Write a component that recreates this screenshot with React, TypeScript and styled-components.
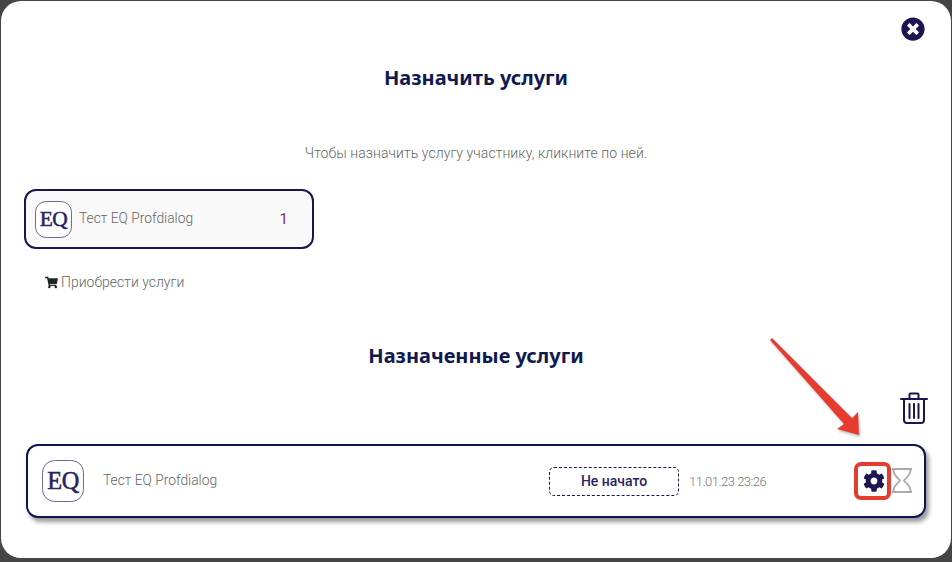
import {createGlobalStyle} from "styled-components"
import styled from "styled-components"
import {FaCog, FaShoppingCart, FaTimesCircle} from "react-icons/fa"

const Global = createGlobalStyle`
html, body {
	margin     : 0;
	height     : 562px;
	overflow   : hidden;
	background : #454545;
	font-family: Roboto, "Noto Sans", sans-serif;
}
`

const Modal = styled.div`
position       : relative;
box-sizing     : border-box;
margin         : 1px 1px 0 1px;
width          : 950px;
height         : 557px;
padding-top    : 16px;
background     : #fff;
border-radius  : 20px;
display        : flex;
flex-direction : column;
`

const CloseRow = styled.div`
display         : flex;
justify-content : flex-end;
height          : 24px;
padding-right   : 26px;
color           : #1c1550;
font-size       : 24px;
`

const Title = styled.h2<{$top: number}>`
margin      : ${p => p.$top}px 0 0;
height      : 30px;
line-height : 30px;
text-align  : center;
font-family : "Noto Sans", sans-serif;
font-size   : 20px;
font-weight : 700;
color       : #0f1a50;
`

const Hint = styled.p`
margin         : 50px 0 0;
height         : 20px;
line-height    : 20px;
text-align     : center;
font-size      : 14px;
font-weight    : 300;
letter-spacing : 0.07px;
color          : #666;
`

const ServiceCard = styled.div`
box-sizing    : border-box;
margin        : 26px 0 0 23px;
width         : 290px;
height        : 60px;
padding       : 0 24px 0 9px;
display       : flex;
align-items   : center;
gap           : 7px;
background    : #f9f9f9;
border        : 2px solid #1c1450;
border-radius : 12px;
`

const LogoBox = styled.div<{$size: number}>`
box-sizing      : border-box;
flex            : none;
width           : ${p => p.$size}px;
height          : ${p => p.$size}px;
display         : flex;
align-items     : center;
justify-content : center;
background      : #fff;
border          : 1px solid #6f6a96;
border-radius   : ${p => p.$size * 0.3}px;
font-family     : "Liberation Serif", serif;
font-weight     : 400;
font-size       : ${p => p.$size * 0.58}px;
letter-spacing  : -0.5px;
-webkit-text-stroke : 0.5px #2a2360;
color           : #2a2360;
`

const ServiceName = styled.span`
flex          : 1;
margin-bottom : 2px;
font-size     : 13.800px;
font-weight   : 300;
color         : #666;
`

const Count = styled.span`
font-size   : 15px;
font-weight : 400;
color       : #8a2a60;
`

const BuyRow = styled.div`
margin      : 23px 0 0 44px;
height      : 20px;
display     : flex;
align-items : center;
gap         : 3px;
font-size   : 14px;
font-weight : 300;
color       : #666;
svg { color: #222; font-size: 13px; }
`

const TrashRow = styled.div`
display         : flex;
justify-content : flex-end;
margin-top      : 21px;
padding-right   : 23px;
height          : 32px;
`

const AssignedCard = styled.div`
box-sizing    : border-box;
margin        : 20px 0 0 25px;
width         : 900px;
height        : 74px;
padding       : 0 11px 0 14px;
display       : flex;
align-items   : center;
background    : #fff;
border        : 2px solid #0b1550;
border-radius : 12px;
box-shadow    : 3px 4px 4px rgba(0, 0, 0, 0.4);
`

const AssignedName = styled.span`
margin      : 0 0 2px 19px;
width       : 446px;
font-size   : 13.800px;
font-weight : 300;
color       : #666;
`

const Status = styled.span`
box-sizing      : border-box;
width           : 130px;
height          : 29px;
display         : flex;
align-items     : center;
justify-content : center;
border          : 1px dashed #1c1450;
border-radius   : 5px;
font-size       : 14px;
font-weight     : 500;
color           : #2a2360;
`

const DateText = styled.span`
margin-left    : 10px;
flex           : 1;
font-size      : 13px;
font-weight    : 300;
letter-spacing : -0.5px;
color          : #777;
`

const GearButton = styled.span`
box-sizing      : border-box;
width           : 37px;
height          : 38px;
padding-left    : 2px;
display         : flex;
align-items     : center;
justify-content : center;
border          : 4px solid #e63c30;
border-radius   : 7px;
color           : #1c1550;
font-size       : 22px;
`

const HourglassIcon = styled.svg`
margin-bottom : 2px;
`

const Arrow = styled.svg`
position : absolute;
left     : 768px;
top      : 336px;
filter   : drop-shadow(1px 2px 1px rgba(0, 0, 0, 0.25));
`

function Trash() {
	return (
		<svg width="28" height="32" viewBox="0 0 28 32" fill="none" stroke="#1c1550" strokeWidth="2" strokeLinecap="round">
			<path d="M1 7h26"/>
			<path d="M9.500 6V2.500Q9.500 1.500 10.500 1.500H17.500Q18.500 1.500 18.500 2.500V6"/>
			<path d="M4 8V28Q4 31 7 31H21Q24 31 24 28V8"/>
			<path d="M9.500 12V26M14 12V26M18.500 12V26"/>
		</svg>
	)
}

function Hourglass() {
	return (
		<HourglassIcon width="22" height="25" viewBox="0 0 22 25" fill="none" stroke="#aaa" strokeWidth="1.800">
			<path d="M1 1H21M1 24H21"/>
			<path d="M2.500 1V3C3 8 7.500 10 9 12.500C7.500 15 3 17 2.500 22V24"/>
			<path d="M19.500 1V3C19 8 14.500 10 13 12.500C14.500 15 19 17 19.500 22V24"/>
		</HourglassIcon>
	)
}

export default function App() {
	return (
		<>
			<Global/>
			<Modal>
				<CloseRow><FaTimesCircle/></CloseRow>
				<Title $top={22}>Назначить услуги</Title>
				<Hint>Чтобы назначить услугу участнику, кликните по ней.</Hint>

				<ServiceCard>
					<LogoBox $size={37}>EQ</LogoBox>
					<ServiceName>Тест EQ Profdialog</ServiceName>
					<Count>1</Count>
				</ServiceCard>

				<BuyRow><FaShoppingCart/>Приобрести услуги</BuyRow>

				<Title $top={49}>Назначенные услуги</Title>
				<TrashRow><Trash/></TrashRow>

				<AssignedCard>
					<LogoBox $size={42}>EQ</LogoBox>
					<AssignedName>Тест EQ Profdialog</AssignedName>
					<Status>Не начато</Status>
					<DateText>11.01.23 23:26</DateText>
					<GearButton><FaCog/></GearButton>
					<Hourglass/>
				</AssignedCard>

				<Arrow width="94" height="102" viewBox="0 0 94 102">
					<path d="M1 3L3 1L83 81L89 75L90 98L68 92L75 87Z" fill="#e63c30"/>
				</Arrow>
			</Modal>
		</>
	)
}
